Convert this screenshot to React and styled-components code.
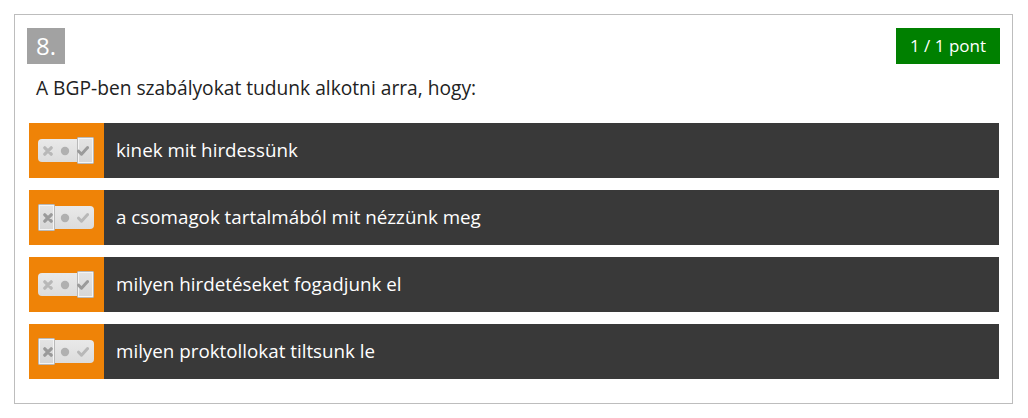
import React from "react";
import styled, { createGlobalStyle } from "styled-components";

const Global = createGlobalStyle`
  html, body { margin: 0; padding: 0; background: #fff; }
  body { font-family: "Open Sans", "Noto Sans", sans-serif; }
`;

const Page = styled.div`
  padding: 14px 15px 13px 14px;
`;

const Card = styled.div`
  border: 1px solid #bdbdbd;
  padding: 13px 12px 25px 12px;
  height: 390px;
  box-sizing: border-box;
`;

const Header = styled.div`
  display: flex;
  justify-content: space-between;
  align-items: flex-start;
`;

const Number = styled.div`
  background: #a2a2a2;
  color: #fff;
  font-size: 24px;
  height: 36px;
  line-height: 36px;
  padding: 0 9px;
`;

const Points = styled.div`
  background: #008000;
  color: #fff;
  font-size: 17px;
  height: 36px;
  line-height: 36px;
  padding: 0 14px;
`;

const Question = styled.div`
  color: #222;
  font-size: 19.2px;
  line-height: 24px;
  padding: 12px 0 0 9px;
  margin-bottom: 23px;
`;

const List = styled.div`
  display: flex;
  flex-direction: column;
  gap: 12px;
  margin: 0 1px 0 2px;
`;

const Row = styled.div`
  display: flex;
  height: 55px;
  background: #393939;
`;

const Side = styled.div`
  width: 75px;
  background: #ef8307;
  display: flex;
  align-items: center;
  padding-left: 9px;
  box-sizing: border-box;
`;

const Toggle = styled.div`
  position: relative;
  width: 56px;
  height: 23px;
  border-radius: 4px;
  background: linear-gradient(#e9e9e9, #dcdcdc);
  display: flex;
  align-items: center;
  justify-content: space-around;
  color: #b0b0b0;
  box-sizing: border-box;
  padding: 0 2px;
`;

const Mark = styled.div`
  position: absolute;
  top: -2px;
  ${(p) => (p.$side === "left" ? "left: 0;" : "right: 0;")}
  width: 17px;
  height: 27px;
  box-sizing: border-box;
  border: 1px solid #b9b9b9;
  box-shadow: inset 0 0 0 1px #f4f4f4;
  background: linear-gradient(#e4e4e4, #d6d6d6);
  border-radius: 1px;
`;

const Icon = styled.svg`
  position: relative;
  z-index: 1;
  display: block;
`;

const Label = styled.div`
  flex: 1;
  display: flex;
  align-items: center;
  color: #fff;
  font-size: 18.8px;
  padding: 0 0 2px 12px;
`;

const Cross = ({ dark }) => (
  <Icon width="10" height="10" viewBox="0 0 10 10">
    <path d="M1.8 1.8 L8.2 8.2 M8.2 1.8 L1.8 8.2" stroke={dark ? "#9a9a9a" : "#b8b8b8"} strokeWidth="3.2" strokeLinecap="round" />
  </Icon>
);

const Dot = () => (
  <Icon width="10" height="10" viewBox="0 0 10 10">
    <circle cx="5" cy="5" r="4.2" fill="#b0b0b0" />
  </Icon>
);

const Check = ({ dark }) => (
  <Icon width="12" height="10" viewBox="0 0 12 10">
    <path d="M1.6 5.2 L4.5 8.2 L10.6 1.6" fill="none" stroke={dark ? "#9a9a9a" : "#b8b8b8"} strokeWidth="3" strokeLinecap="round" strokeLinejoin="round" />
  </Icon>
);

const items = [
  { text: "kinek mit hirdessünk", side: "right" },
  { text: "a csomagok tartalmából mit nézzünk meg", side: "left" },
  { text: "milyen hirdetéseket fogadjunk el", side: "right" },
  { text: "milyen proktollokat tiltsunk le", side: "left" },
];

export default function App() {
  return (
    <Page>
      <Global />
      <Card>
        <Header>
          <Number>8.</Number>
          <Points>1 / 1 pont</Points>
        </Header>
        <Question>A BGP-ben szabályokat tudunk alkotni arra, hogy:</Question>
        <List>
          {items.map((it) => (
            <Row key={it.text}>
              <Side>
                <Toggle>
                  <Mark $side={it.side} />
                  <Cross dark={it.side === "left"} />
                  <Dot />
                  <Check dark={it.side === "right"} />
                </Toggle>
              </Side>
              <Label>{it.text}</Label>
            </Row>
          ))}
        </List>
      </Card>
    </Page>
  );
}
